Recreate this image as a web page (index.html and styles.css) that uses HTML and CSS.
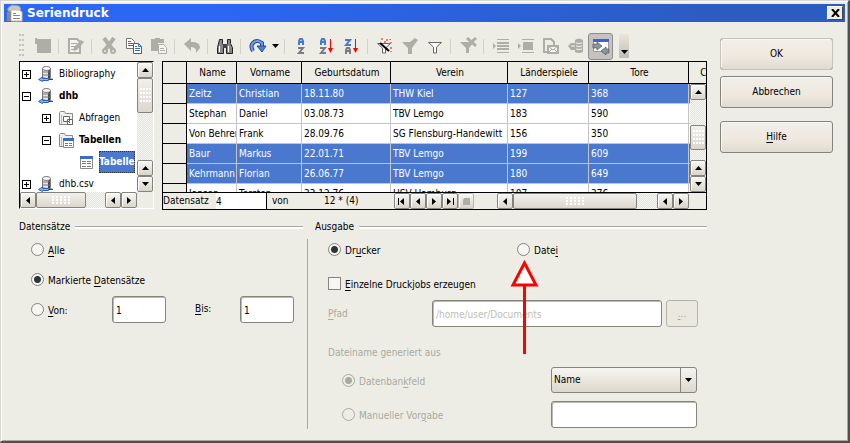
FILE: index.html
```html
<!DOCTYPE html>
<html lang="de">
<head>
  <meta charset="UTF-8">
  <title>Seriendruck</title>
  <link rel="stylesheet" href="styles.css">
</head>
<body>

<svg class="symbols" aria-hidden="true">
  <symbol id="up" viewBox="0 0 7 4"><path d="M0 4L3.500 0L7 4z"/></symbol>
  <symbol id="down" viewBox="0 0 7 4"><path d="M0 0h7L3.500 4z"/></symbol>
  <symbol id="left" viewBox="0 0 4 7"><path d="M4 0v7L0 3.500z"/></symbol>
  <symbol id="right" viewBox="0 0 4 7"><path d="M0 0v7L4 3.500z"/></symbol>
  <symbol id="db" viewBox="0 0 16 16">
    <path d="M4.500 2.500v9q4 2 8 0v-9z" fill="#e4e4e4" stroke="#777"/>
    <path d="M10 3h2v9h-2z" fill="#444"/>
    <path d="M4 6h9M4 9h9" stroke="#777"/>
    <ellipse cx="8.500" cy="2.500" rx="4" ry="2" fill="#fff" stroke="#777"/>
    <path d="M11 12l4 1v1h-5z" fill="#444"/>
    <path d="M.500 13.500l4-2.500v1.500h6v2h-6v1z" fill="#8db4ec" stroke="#2f62bd"/>
  </symbol>
  <symbol id="folder" viewBox="0 0 16 16">
    <path d="M1.500 14.500v-12l1-1h4l1 2h7v11z" fill="#f0f0ee" stroke="#8a8a8a"/>
    <path d="M3.500 5v9" stroke="#bbb"/>
  </symbol>
</svg>

<div class="window">
  <header class="titlebar">
    <svg width="18" height="18" viewBox="0 0 18 18">
      <path d="M2 4l4-3 7 1 2 3-2 2H2z" fill="#c9c6ba" stroke="#a19f94"/>
      <path d="M5 6h8l3 2v9H5z" fill="#fff" stroke="#c5c2b5"/>
      <path d="M1 8h4v9H1z" fill="#8d8a80"/>
      <path d="M7 9.500h3M7 11.500h7M7 14.500h7" stroke="#888"/>
    </svg>
    <h1>Seriendruck</h1>
    <button class="close" aria-label="Schließen"><svg width="9" height="8" viewBox="0 0 9 8"><path d="M1 0l7 8M8 0L1 8" stroke="#000" stroke-width="2"/></svg></button>
  </header>

  <div class="content">
    <main>
      <div class="toolbar">
        <span class="grip"></span>
        <button disabled aria-label="Speichern"><svg viewBox="0 0 18 18"><path d="M1 1h2v1h14v14H3V7H1z" fill="#adafa6"/></svg></button>
        <i></i>
        <button disabled aria-label="Bearbeiten"><svg viewBox="0 0 18 18"><path d="M2 2h8l3 3v11H2z" fill="#f4f4ee" stroke="#adafa6" stroke-width="2"/><path d="M4 6.500h6M4 9.500h6M4 12.500h4" stroke="#adafa6"/><path d="M6 14l1-4 7-7 3 2-7 8z" fill="#adafa6"/></svg></button>
        <i></i>
        <button disabled aria-label="Ausschneiden"><svg viewBox="0 0 18 18"><path d="M4 1l9 12M14 1L5 13" stroke="#adafa6" stroke-width="4"/><circle cx="5" cy="14" r="2" fill="none" stroke="#adafa6" stroke-width="2"/><circle cx="13" cy="14" r="2" fill="none" stroke="#adafa6" stroke-width="2"/></svg></button>
        <button aria-label="Kopieren"><svg viewBox="0 0 18 18"><path d="M1.500 1.500h5l3 3v7h-8z" fill="#fff" stroke="#777"/><path d="M3 4.500h3M3 6.500h5M3 8.500h5" stroke="#3c6cc0"/><path d="M8.500 6.500h5l3 3v7h-8z" fill="#fff" stroke="#3d5f9c"/><path d="M13.500 6.500v3h3M10 9.500h2M10 11.500h5M10 13.500h5" fill="none" stroke="#3c6cc0"/></svg></button>
        <button disabled aria-label="Einfügen"><svg viewBox="0 0 18 18"><path d="M1 2h4V1h5v1h4v4H8v8H1z" fill="#adafa6"/><path d="M8.500 7.500h5l3 3v6h-8z" fill="#f4f4ee" stroke="#adafa6"/><path d="M10 11.500h4M10 13.500h5" stroke="#adafa6"/></svg></button>
        <i></i>
        <button disabled aria-label="Rückgängig"><svg viewBox="0 0 18 18"><path d="M1 7l7-6v4q9-1 9 6l-4 5q1-6-5-6v4z" fill="#adafa6"/></svg></button>
        <i></i>
        <button aria-label="Suchen"><svg viewBox="0 0 18 18"><path d="M3.500 2.500h3v4l1 2v8h-6v-6zM11.500 2.500h3v4l2 4v6h-6v-8l1-2z" fill="#888" stroke="#222"/><path d="M7 7h4v4H7z" fill="#444"/><path d="M3.500 9v6M12.500 9v6" stroke="#fff"/></svg></button>
        <i></i>
        <button aria-label="Aktualisieren"><svg viewBox="0 0 18 18"><path d="M4 14Q1 9 4 6q4-4 9 0v3" fill="none" stroke="#244a99" stroke-width="4"/><path d="M4 14Q1 9 4 6q4-4 9 0v3" fill="none" stroke="#6d9de8" stroke-width="2"/><path d="M8 9h9l-4 6z" fill="#4c80d6" stroke="#244a99"/></svg></button>
        <button class="caret" aria-label="Mehr"><svg class="a-h"><use href="#down"/></svg></button>
        <i></i>
        <button aria-label="Sortierung"><svg viewBox="0 0 18 18"><path d="M6 8V4l1-2h2l1 2v4M7 5h3" fill="none" stroke="#4a7ad0" stroke-width="2"/><path d="M5 11h5l-4 5h5" fill="none" stroke="#7c7c7c" stroke-width="2"/></svg></button>
        <button aria-label="Aufsteigend sortieren"><svg viewBox="0 0 18 18"><path d="M3 8V4l1-2h2l1 2v4M4 5h3" fill="none" stroke="#4a7ad0" stroke-width="2"/><path d="M2 11h5l-4 5h5" fill="none" stroke="#7c7c7c" stroke-width="2"/><path d="M12.500 2v10" stroke="#f00"/><path d="M10 11h5l-2.500 5z" fill="#f00"/></svg></button>
        <button aria-label="Absteigend sortieren"><svg viewBox="0 0 18 18"><path d="M2 3h5L3 8h5" fill="none" stroke="#4a7ad0" stroke-width="2"/><path d="M3 17v-4l1-2h2l1 2v4M4 14h3" fill="none" stroke="#7c7c7c" stroke-width="2"/><path d="M12.500 2v10" stroke="#f00"/><path d="M10 11h5l-2.500 5z" fill="#f00"/></svg></button>
        <i></i>
        <button aria-label="AutoFilter"><svg viewBox="0 0 18 18"><path d="M1.500 6.500h13L9.500 11v5h-3v-5z" fill="#fff" stroke="#666"/><path d="M4 6l9 8" stroke="#000" stroke-width="2"/><path d="M6 1v2M11 2v2M15 5v1M16 11h-2M15 15v-1M9 4v2M14 2v1" stroke="#e00"/></svg></button>
        <button disabled aria-label="Filter anwenden"><svg viewBox="0 0 18 18"><path d="M1 5h8l5-4 3 2-6 8v6H7v-6z" fill="#adafa6"/></svg></button>
        <button aria-label="Standardfilter"><svg viewBox="0 0 18 18"><path d="M2.500 5.500h13L10.500 10v6h-3v-6z" fill="#fff" stroke="#666"/></svg></button>
        <i></i>
        <button disabled aria-label="Filter entfernen"><svg viewBox="0 0 18 18"><path d="M1 5h14l-5 6v5H7v-5z" fill="#adafa6"/><path d="M8 1l9 8M17 1L8 9" stroke="#adafa6" stroke-width="3"/></svg></button>
        <i></i>
        <button disabled aria-label="Daten in Text"><svg viewBox="0 0 18 18"><path d="M1 6l3 3-3 3zM5 2h12v1H5zM5 5h12v2H5zM5 8h12v2H5zM5 11h12v2H5zM5 15h12v1H5z" fill="#adafa6"/></svg></button>
        <button disabled aria-label="Daten in Felder"><svg viewBox="0 0 18 18"><path d="M1 6l3 3-3 3zM5 2h12v1H5zM6 5h10v8H6zM5 15h12v1H5z" fill="#adafa6"/></svg></button>
        <button disabled aria-label="Seriendruck"><svg viewBox="0 0 18 18"><path d="M6 15H2V2h7l3 3v3" fill="none" stroke="#adafa6" stroke-width="2"/><path d="M6 9h10v7H6z" fill="#f4f4ee" stroke="#adafa6" stroke-width="2"/><path d="M6 9l5 4 5-4M6 16l4-4M16 16l-4-4" fill="none" stroke="#adafa6"/></svg></button>
        <button disabled aria-label="Datenquelle"><svg viewBox="0 0 18 18"><path d="M8 3q4-3 8 0v12q-4 2-8 0v-2H4L1 9l3-3h4z" fill="#adafa6"/><path d="M9 6q3 1 6 0M9 9q3 1 6 0M9 12q3 1 6 0M4 9h4" fill="none" stroke="#f4f4ee"/></svg></button>
        <button class="pressed" aria-label="Explorer"><svg viewBox="0 0 18 18"><path d="M1.500 2.500h15v12h-15z" fill="#fff" stroke="#999"/><path d="M1 2h16v3H1z" fill="#3268d0"/><path d="M1 7h4V5l5 4-5 4v-2H1zM17 12h-3v-2l-5 4 5 4v-2h3z" fill="#8b9698" stroke="#4e5c60" stroke-width=".7"/></svg></button>
        <button class="overflow" aria-label="Weitere"><svg class="a-h"><use href="#down"/></svg></button>
      </div>

      <div class="browser">
        <div class="tree">
          <ul>
            <li><span class="box plus"></span><svg><use href="#db"/></svg>Bibliography</li>
            <li class="bold"><span class="box"></span><svg><use href="#db"/></svg>dhb</li>
            <li class="level2"><span class="box plus"></span><svg viewBox="0 0 16 16"><use href="#folder"/><path d="M5.500 6.500h6v5h-6zM9.500 9.500h5v5h-5z" fill="#fff" stroke="#666"/><path d="M10 11l2 2" stroke="#36c"/></svg>Abfragen</li>
            <li class="level2 bold"><span class="box"></span><svg viewBox="0 0 16 16"><use href="#folder"/><path d="M5.500 6.500h10v9h-10z" fill="#fff" stroke="#888"/><path d="M5 6h11v3H5z" fill="#3d6cc4"/><path d="M7 11.500h3M11 11.500h3M7 13.500h3M11 13.500h3" stroke="#777"/></svg>Tabellen</li>
            <li class="level3 bold"><svg viewBox="0 0 16 16"><path d="M2.500 2.500h12v12h-12z" fill="#fff" stroke="#888"/><path d="M2 2h13v3H2z" fill="#3d6cc4"/><path d="M4 7.500h4M9 7.500h4M4 9.500h4M9 9.500h4M4 12.500h4M9 12.500h4" stroke="#777"/></svg><mark>Tabelle</mark></li>
            <li><span class="box plus"></span><svg><use href="#db"/></svg>dhb.csv</li>
          </ul>
          <div class="scroll vertical">
            <button aria-label="Hoch"><svg class="a-h"><use href="#up"/></svg></button>
            <span class="thumb"></span>
            <span class="track"></span>
            <button aria-label="Hoch"><svg class="a-h"><use href="#up"/></svg></button>
            <button aria-label="Runter"><svg class="a-h"><use href="#down"/></svg></button>
          </div>
          <div class="scroll">
            <button aria-label="Links"><svg class="a-v"><use href="#left"/></svg></button>
            <span class="thumb"></span>
            <span class="track"></span>
            <button aria-label="Links"><svg class="a-v"><use href="#left"/></svg></button>
            <button aria-label="Rechts"><svg class="a-v"><use href="#right"/></svg></button>
          </div>
        </div>

        <div class="data">
          <div class="rows">
            <table>
              <colgroup><col class="c-mark"><col class="c-name"><col class="c-first"><col class="c-date"><col class="c-club"><col class="c-games"><col class="c-goals"><col class="c-more"></colgroup>
              <thead>
                <tr><th></th><th>Name</th><th>Vorname</th><th>Geburtsdatum</th><th>Verein</th><th>Länderspiele</th><th>Tore</th><th>C</th></tr>
              </thead>
              <tbody>
                <tr class="selected"><th></th><td>Zeitz</td><td>Christian</td><td>18.11.80</td><td>THW Kiel</td><td>127</td><td>368</td><td></td></tr>
                <tr><th></th><td>Stephan</td><td>Daniel</td><td>03.08.73</td><td>TBV Lemgo</td><td>183</td><td>590</td><td></td></tr>
                <tr><th></th><td>Von Behren</td><td>Frank</td><td>28.09.76</td><td>SG Flensburg-Handewitt</td><td>156</td><td>350</td><td></td></tr>
                <tr class="selected"><th></th><td>Baur</td><td>Markus</td><td>22.01.71</td><td>TBV Lemgo</td><td>199</td><td>609</td><td></td></tr>
                <tr class="selected"><th></th><td>Kehrmann</td><td>Florian</td><td>26.06.77</td><td>TBV Lemgo</td><td>180</td><td>649</td><td></td></tr>
                <tr><th></th><td>Jansen</td><td>Torsten</td><td>23.12.76</td><td>HSV Hamburg</td><td>107</td><td>276</td><td></td></tr>
              </tbody>
            </table>
            <div class="scroll vertical">
              <button aria-label="Hoch"><svg class="a-h"><use href="#up"/></svg></button>
              <span class="track"></span>
              <span class="thumb"></span>
              <span class="track gap"></span>
              <button aria-label="Hoch"><svg class="a-h"><use href="#up"/></svg></button>
              <button aria-label="Runter"><svg class="a-h"><use href="#down"/></svg></button>
            </div>
          </div>
          <div class="record">
            <label for="record">Datensatz</label>
            <input id="record" type="text" value="4">
            <span class="of">von</span>
            <span class="count">12 * (4)</span>
            <div class="nav">
              <button aria-label="Erster"><svg viewBox="0 0 9 7"><path d="M0 0h1v7H0zM6 0v7L2 3.500z"/></svg></button>
              <button aria-label="Voriger"><svg class="a-v"><use href="#left"/></svg></button>
              <button aria-label="Nächster"><svg class="a-v"><use href="#right"/></svg></button>
              <button aria-label="Letzter"><svg viewBox="0 0 9 7"><path d="M1 0v7L5 3.500zM7 0h1v7H7z"/></svg></button>
              <button disabled aria-label="Neu"><svg viewBox="0 0 9 7"><path d="M2 0h6v7H1V2z" fill="#adafa6"/></svg></button>
            </div>
            <div class="scroll">
              <button aria-label="Links"><svg class="a-v"><use href="#left"/></svg></button>
              <span class="thumb"></span>
              <span class="track"></span>
              <button aria-label="Links"><svg class="a-v"><use href="#left"/></svg></button>
              <button aria-label="Rechts"><svg class="a-v"><use href="#right"/></svg></button>
            </div>
          </div>
        </div>
      </div>

      <div class="options">
        <fieldset class="records">
          <legend>Datensätze</legend>
          <label class="choice"><input type="radio" name="records"><span><u>A</u>lle</span></label>
          <label class="choice"><input type="radio" name="records" checked><span>Markierte <u>D</u>atensätze</span></label>
          <div class="range">
            <label class="choice"><input type="radio" name="records"><span><u>V</u>on:</span></label>
            <input type="text" value="1" aria-label="Von">
            <label for="to"><u>B</u>is:</label>
            <input id="to" type="text" value="1">
          </div>
        </fieldset>

        <fieldset class="output">
          <legend>Ausgabe</legend>
          <div class="targets">
            <label class="choice"><input type="radio" name="output" checked><span>Dr<u>u</u>cker</span></label>
            <label class="choice file">
              <input type="radio" name="output"><span>Date<u>i</u></span>
              <svg class="arrow" width="30" height="96" viewBox="0 0 30 96"><path d="M14.500 26v68" stroke="#f00" stroke-width="3"/><path d="M14.500 3L3 25h23z" fill="#fff" stroke="#f00" stroke-width="3"/></svg>
            </label>
          </div>
          <label class="choice single"><input type="checkbox"><span><u>E</u>inzelne Druckjobs erzeugen</span></label>
          <div class="path off">
            <label for="path"><u>P</u>fad</label>
            <input id="path" type="text" value="/home/user/Documents" disabled>
            <button disabled><u>.</u>..</button>
          </div>
          <p class="off">Dateiname generiert aus</p>
          <div class="naming">
            <label class="choice off"><input type="radio" name="naming" checked disabled><span>Datenban<u>k</u>feld</span></label>
            <div class="select">
              <select aria-label="Datenbankfeld"><option>Name</option></select>
              <svg class="a-h"><use href="#down"/></svg>
            </div>
            <label class="choice off"><input type="radio" name="naming" disabled><span>Manueller Vor<u>g</u>abe</span></label>
            <input type="text" aria-label="Manuelle Vorgabe">
          </div>
        </fieldset>
      </div>
    </main>

    <aside>
      <button class="default">OK</button>
      <button>Abbrechen</button>
      <button class="help"><u>H</u>ilfe</button>
    </aside>
  </div>
</div>

</body>
</html>
```
FILE: styles.css
```css
* {
  box-sizing: border-box;
}

body {
  margin: 0;
  background: #eeede5;
  color: #000;
  font: 10px/14px "DejaVu Sans Condensed", "DejaVu Sans", sans-serif;
}

button, input, select {
  margin: 0;
  font: inherit;
  color: inherit;
}

button {
  padding: 0;
}

svg {
  display: block;
  flex: none;
}

u {
  text-underline-offset: 2px;
}

.symbols {
  position: absolute;
  width: 0;
  height: 0;
}

.a-h {
  width: 7px;
  height: 4px;
}

.a-v {
  width: 4px;
  height: 7px;
}

.window {
  min-height: 100vh;
  padding: 2px;
  border: 1px solid #d8d7cf;
  border-right: 2px solid #4c5052;
  border-bottom: 2px solid #4c5052;
  box-shadow: inset 1px 1px #fff, inset -1px -1px #aaa9a1;
}

/* title bar */
.titlebar {
  display: flex;
  align-items: center;
  height: 18px;
  margin: 1px;
  padding: 0 2px;
  gap: 3px;
  background: linear-gradient(90deg, #2c66f4 25%, #2b5cc2 85%);
  color: #fff;
}

.titlebar h1 {
  flex: 1;
  margin: 0;
  font: bold 12px/16px "DejaVu Sans", sans-serif;
}

.close {
  display: grid;
  place-items: center;
  width: 16px;
  height: 14px;
  border: 1px solid #fff;
  border-right-color: #444;
  border-bottom-color: #444;
  background: #eeede5;
}

.content {
  display: flex;
  gap: 13px;
  padding: 9px 13px 0 16px;
}

main {
  flex: 1;
  min-width: 0;
}

/* toolbar */
.toolbar {
  display: flex;
  align-items: center;
  height: 28px;
}

.toolbar button {
  display: grid;
  place-items: center;
  width: 25px;
  height: 27px;
  border: 0;
  background: none;
}

.toolbar button svg:not(.a-h) {
  width: 18px;
  height: 18px;
}

.toolbar i {
  width: 1px;
  height: 15px;
  margin: 0 4px 0 3px;
  background: #d4d2c8;
}

.grip {
  width: 6px;
  height: 24px;
  margin-right: 5px;
  background: radial-gradient(circle at 1px 1px, #c4c2b8 1px, transparent 1px) 0 0 / 3px 5px;
}

.toolbar .caret {
  width: 11px;
}

.toolbar .pressed {
  border: 1px solid #8f8d88;
  border-radius: 3px;
  background: #c6c2c0;
}

.toolbar .overflow {
  width: 10px;
  height: 24px;
  margin-left: 6px;
  padding-top: 12px;
  background: linear-gradient(#ebe5da, #bfbdb9);
}

/* scroll bars */
.scroll {
  display: flex;
  height: 16px;
  background: #f0efea;
}

.scroll button, .nav button {
  display: grid;
  place-items: center;
  flex: none;
  width: 16px;
  height: 16px;
  border: 1px solid #85837d;
  border-radius: 2px;
  background: linear-gradient(#f8f7f3, #d9d5cb);
  box-shadow: inset 1px 1px #fff;
}

.track {
  flex: 1;
  background: repeating-conic-gradient(#e3e2da 0 25%, #f7f7f3 0 50%) 0 0 / 2px 2px;
}

.thumb {
  display: grid;
  place-items: center;
  width: 50px;
  border: 1px solid #85837d;
  border-radius: 2px;
  background: linear-gradient(#f2f0ea, #dbd7ce);
}

.thumb::before {
  content: "";
  width: 18px;
  height: 9px;
  background: radial-gradient(circle at 1px 1px, #fff 1px, transparent 1px) 0 0 / 4px 3px;
}

.vertical {
  flex-direction: column;
  width: 16px;
  height: auto;
}

.vertical .thumb {
  width: 16px;
  height: 35px;
}

.vertical .thumb::before {
  width: 11px;
  height: 16px;
  background-size: 3px 4px;
}

/* data source browser */
.browser {
  display: flex;
  gap: 8px;
  height: 149px;
  margin-top: 1px;
}

.tree {
  display: grid;
  grid-template: 1fr 16px / 1fr 16px;
  flex: none;
  width: 135px;
  height: 148px;
  border: 1px solid #000;
  border-right-color: #fff;
  border-bottom-color: #fff;
}

.tree ul {
  margin: 0;
  padding: 1px 0 0;
  overflow: hidden;
  background: #fff;
  list-style: none;
}

.tree li {
  display: flex;
  align-items: center;
  height: 22px;
  padding-left: 2px;
  white-space: nowrap;
}

.tree li svg {
  width: 16px;
  height: 16px;
  margin: 0 5px 0 7px;
}

.tree .level2 {
  padding-left: 22px;
}

.tree .level3 {
  padding-left: 51px;
}

.bold {
  font-weight: bold;
}

.box {
  width: 9px;
  height: 9px;
  border: 1px solid #000;
  background: linear-gradient(#000, #000) center / 5px 1px no-repeat;
}

.box.plus {
  background: linear-gradient(#000, #000) center / 5px 1px no-repeat, linear-gradient(#000, #000) center / 1px 5px no-repeat;
}

mark {
  height: 22px;
  outline: 1px dotted #333;
  outline-offset: -1px;
  background: #4a78ce;
  color: #fff;
  line-height: 22px;
}

/* table */
.data {
  display: flex;
  flex-direction: column;
  flex: 1;
  min-width: 0;
  border: 1px solid #000;
}

.rows {
  position: relative;
  flex: 1;
  min-height: 0;
  overflow: hidden;
  background: #fff;
}

table {
  width: 544px;
  border-spacing: 0;
  table-layout: fixed;
}

.c-mark { width: 24px; }
.c-name { width: 50px; }
.c-first { width: 65px; }
.c-date { width: 89px; }
.c-club { width: 117px; }
.c-games { width: 81px; }
.c-goals { width: 100px; }
.c-more { width: 18px; }

th, td {
  height: 20px;
  padding: 1px 0 0 2px;
  overflow: hidden;
  border-right: 1px solid #c4c4c4;
  border-bottom: 1px solid #c4c4c4;
  font-weight: normal;
  text-align: left;
  white-space: nowrap;
}

th {
  border-color: #000;
  background: #eeede5;
}

thead th {
  height: 22px;
  text-align: center;
}

thead th:last-child {
  padding-left: 11px;
}

th:last-child, td:last-child {
  border-right: 0;
}

.selected td {
  background: #4a78ce;
  color: #fff;
}

.rows .scroll {
  position: absolute;
  top: 22px;
  right: 0;
  bottom: 0;
}

.rows .thumb {
  height: 25px;
}

.rows .gap {
  flex: 0 0 10px;
}

.record {
  display: flex;
  align-items: center;
  height: 17px;
  padding-right: 17px;
  border-top: 1px solid #000;
}

.record label {
  width: 53px;
}

.record input {
  width: 51px;
  height: 16px;
  padding: 0;
  border: 0;
  border-right: 1px solid #000;
  background: #fff;
}

.of {
  width: 52px;
  padding-left: 5px;
}

.count {
  width: 75px;
  padding-left: 5px;
}

.nav {
  display: flex;
  margin-right: 23px;
}

.nav svg:not(.a-v) {
  width: 9px;
  height: 7px;
}

.nav button:disabled {
  border-color: #b7b5ae;
}

.record .scroll {
  flex: 1;
}

.record .thumb {
  flex: 1;
}

.record .track {
  flex: 0 0 20px;
}

/* options */
.options {
  display: flex;
  margin-top: 10px;
}

fieldset {
  min-width: 0;
  margin: 0;
  padding: 0;
  border: 0;
}

legend {
  display: flex;
  align-items: center;
  width: 100%;
  padding: 0;
  gap: 5px;
}

legend::after {
  content: "";
  flex: 1;
  height: 2px;
  border-top: 1px solid #a9a9a0;
  background: #fff;
}

.records {
  width: 284px;
}

.output {
  flex: 1;
  margin-left: 4px;
  padding-left: 8px;
  background: linear-gradient(#a9a9a0, #a9a9a0) 0 12px / 1px 100% no-repeat;
}

.choice {
  display: flex;
  align-items: center;
  height: 30px;
  gap: 4px;
}

.choice span {
  padding-top: 3px;
}

.records > .choice, .range {
  padding-left: 12px;
}

input[type="radio"], input[type="checkbox"] {
  width: 13px;
  height: 13px;
  border: 1px solid #85857c;
  background: #f7f6f2;
  appearance: none;
}

input[type="radio"] {
  border-radius: 50%;
}

input[type="radio"]:checked {
  background: radial-gradient(circle, #2d3436 3px, #f7f6f2 4px);
}

input[type="radio"]:disabled {
  border-color: #a9a9a0;
  background: #eeede5;
}

input[type="radio"]:checked:disabled {
  background: radial-gradient(circle, #a9a9a0 3px, #eeede5 4px);
}

.options input[type="text"] {
  height: 27px;
  padding: 2px 3px 0;
  border: 1px solid #85857c;
  border-radius: 3px;
  background: #fff;
  box-shadow: inset 1px 1px #b9b9b0;
}

.options input[type="text"]:disabled {
  color: #bdbdb6;
}

.range {
  display: flex;
  align-items: center;
}

.range input[type="text"] {
  width: 54px;
}

.range .choice {
  width: 81px;
}

.range > label:not(.choice) {
  width: 74px;
  padding-left: 29px;
}

.targets {
  display: flex;
}

.output > :not(legend) {
  margin-left: 13px;
}

.targets .choice {
  width: 189px;
}

.targets .file {
  position: relative;
}

.arrow {
  position: absolute;
  top: 26px;
  left: -7px;
}

.single {
  margin-top: 4px;
  margin-bottom: 2px;
}

.off {
  color: #a9a9a0;
}

.path {
  display: flex;
  align-items: center;
  padding-right: 9px;
}

.path label {
  width: 104px;
}

.path input {
  flex: 1;
  min-width: 0;
}

.path button {
  width: 32px;
  height: 27px;
  margin-left: 4px;
  border: 1px solid #b4b3aa;
  border-radius: 3px;
  background: #ebe8df;
}

.output p {
  margin-top: 19px;
  margin-bottom: 5px;
}

.naming {
  display: grid;
  grid-template-columns: 1fr 146px;
  align-items: center;
  row-gap: 4px;
  padding: 0 10px 0 14px;
}

.select {
  display: grid;
  align-items: center;
}

.select select {
  grid-area: 1 / 1;
  width: 100%;
  height: 26px;
  padding: 0 2px;
  border: 1px solid #85857c;
  border-radius: 3px;
  background: linear-gradient(90deg, transparent 128px, #85857c 128px, #85857c 129px, transparent 129px), linear-gradient(#f6f5f0, #ddd8cd);
  appearance: none;
}

.select svg {
  grid-area: 1 / 1;
  justify-self: end;
  margin-right: 5px;
  pointer-events: none;
}

/* dialog buttons */
aside {
  display: flex;
  flex-direction: column;
  flex: none;
  width: 113px;
  padding-top: 6px;
  gap: 6px;
}

aside button {
  height: 32px;
  border: 1px solid #85837d;
  border-radius: 3px;
  background: linear-gradient(#f1efe9, #efe8de 60%, #dfdbd1);
  box-shadow: inset 1px 1px #f8f7f2;
}

.default {
  outline: 1px solid #c5c3bb;
  outline-offset: -1px;
}

.help {
  margin-top: 7px;
}
```
